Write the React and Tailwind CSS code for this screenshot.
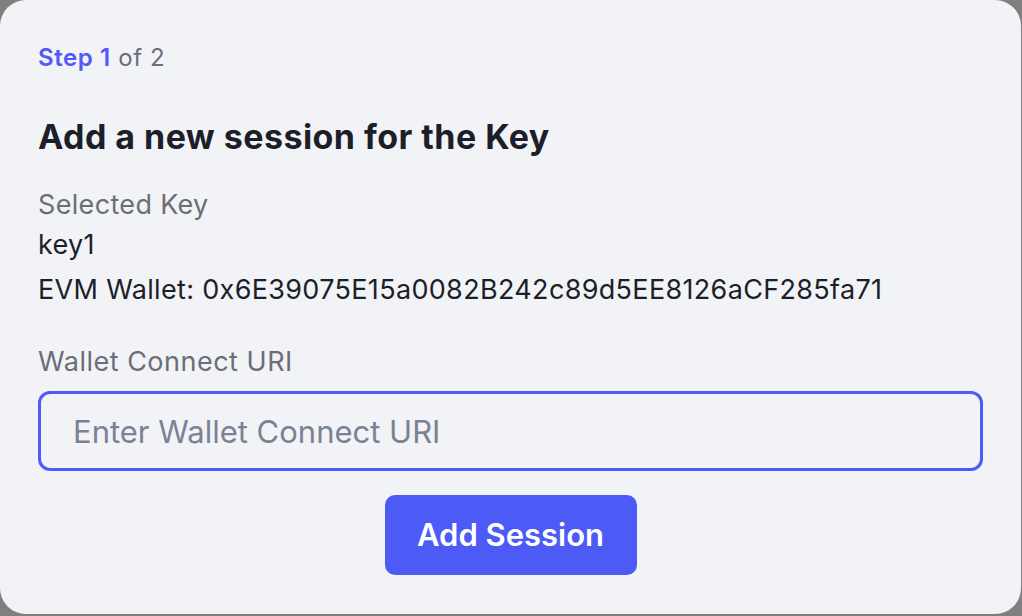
import { useState } from "react";

function App() {
  const [uri, setUri] = useState("");

  return (
    <div className="w-[1022px] h-[616px] bg-[#7f7f7f]" style={{ fontFamily: "Inter, 'Noto Sans', sans-serif" }}>
      <div className="w-[1021px] h-[614px] bg-[#f2f3f7] rounded-[26px] px-[38px] pt-[44px] flex flex-col">
        {/* Step indicator */}
        <div className="text-[24px] leading-[28px] text-[#6b6e78] tracking-[0.6px]">
          <span className="font-semibold text-[#5159f6]">Step 1</span> of 2
        </div>

        <h1 className="mt-[45px] text-[34px] leading-[40px] font-bold text-[#1c1f29] tracking-[0.45px]">
          Add a new session for the Key
        </h1>

        {/* Selected key */}
        <div className="mt-[32px] flex flex-col text-[27px] tracking-[0.33px]">
          <span className="text-[#6b6e78] leading-[32px]">Selected Key</span>
          <span className="mt-[4px] text-[#1c1f29] leading-[40px]">key1</span>
          <span className="mt-[5px] text-[#1c1f29] leading-[40px]">EVM Wallet: 0x6E39075E15a0082B242c89d5EE8126aCF285fa71</span>
        </div>

        {/* URI input */}
        <label className="mt-[36px] text-[27px] leading-[32px] text-[#6b6e78] tracking-[0.5px]">Wallet Connect URI</label>
        <input
          type="text"
          autoFocus
          value={uri}
          onChange={(e) => setUri(e.target.value)}
          placeholder="Enter Wallet Connect URI"
          className="mt-[13px] h-[80px] w-full rounded-[12px] border-[3px] border-[#5159f6] bg-transparent px-[32px] text-[31px] text-[#1c1f29] placeholder:text-[#7a8294] outline-none caret-[#1c1f29]"
        />

        <div className="mt-[24px] flex justify-center">
          <button className="w-[252px] h-[80px] rounded-[10px] bg-[#4c5bf6] text-white text-[31px] font-semibold">
            Add Session
          </button>
        </div>
      </div>
    </div>
  );
}

export default App;
